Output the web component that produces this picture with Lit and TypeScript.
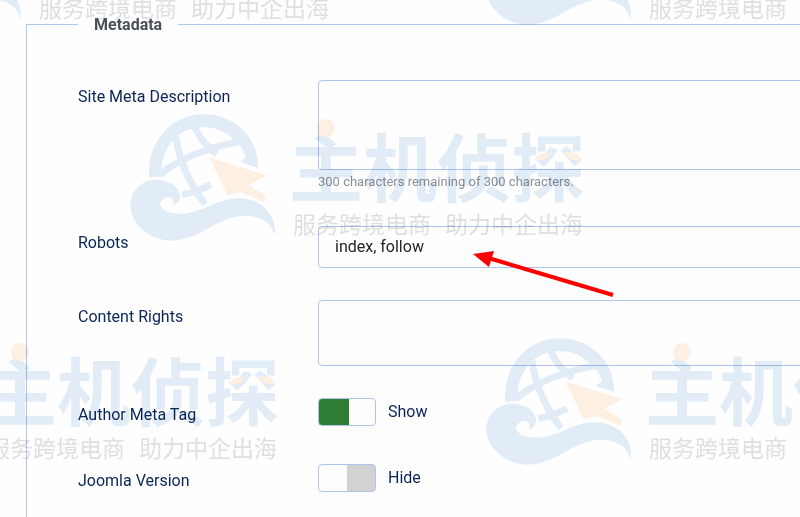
import { LitElement, html, svg, css } from "lit";
import { customElement, state } from "lit/decorators.js";

const STAMPS = [
  { x: -254, y: -216 },
  { x: 356, y: -216 },
  { x: 0, y: 0 },
  { x: -306, y: 224 },
  { x: 356, y: 224 },
];

@customElement("brand-watermark")
export class BrandWatermark extends LitElement {
  static styles = css`
    :host {
      position: absolute;
      inset: 0;
      pointer-events: none;
      mix-blend-mode: multiply;
    }
    .layer {
      display: block;
      width: 100%;
      height: 100%;
    }
    .blue {
      fill: #e3edf8;
    }
    .line {
      fill: none;
      stroke: #e3edf8;
      stroke-width: 21;
    }
    .orange {
      fill: #fef0e2;
    }
    .name {
      font: 700 74px "Noto Sans CJK SC", sans-serif;
      fill: #e3edf8;
    }
    .tagline {
      font: 400 23px "Noto Sans CJK SC", sans-serif;
      fill: #e0e0e0;
    }
  `;

  private stamp(x: number, y: number) {
    return svg`
      <g transform="translate(${x} ${y})">
        <g transform="translate(120 105) scale(0.3333)">
          <path class="blue" d="M88 219 C78 112 155 28 250 28 C345 28 417 100 414 189 L361 171 C362 164 377 162 377 155 C376 145 368 130 356 120 L335 98 C310 75 280 66 245 66 C175 67 120 130 124 217 Q106 213 88 219Z"></path>
          <path class="line" d="M120 209 Q205 138 362 109"></path>
          <path class="line" d="M168 95 Q182 200 255 298"></path>
          <path class="line" d="M224 66 Q242 110 290 148"></path>
          <path class="line" d="M187 269 Q232 260 273 238"></path>
          <path class="orange" d="M270 158 L440 211 L386 239 L439 274 L431 291 L364 262 L322 270Z"></path>
          <path class="blue" d="M463 391 C455 352 420 331 370 332 C290 336 240 405 155 407 C80 405 30 350 31 300 C33 250 70 224 110 224 C155 226 182 250 180 276 C178 292 166 299 158 300 C165 285 156 275 143 276 C125 279 118 292 122 303 C130 320 155 327 190 326 C250 322 290 280 360 280 C430 282 473 335 463 391Z"></path>
        </g>
        <text class="name" x="289" y="196">主机侦探</text>
        <circle class="orange" cx="326" cy="128" r="9"></circle>
        <path class="orange" d="M534 160 Q540 151 552 153 Q546 162 534 160Z M564 153 Q576 150 582 160 Q570 162 564 153Z"></path>
        <text class="tagline" x="293" y="233">服务跨境电商</text>
        <text class="tagline" x="445" y="233">助力中企出海</text>
      </g>`;
  }

  render() {
    return html`<svg class="layer" aria-hidden="true">
      ${STAMPS.map((s) => this.stamp(s.x, s.y))}
    </svg>`;
  }
}

@customElement("app-root")
export class AppRoot extends LitElement {
  @state() private author = true;
  @state() private version = false;

  static styles = css`
    * {
      box-sizing: border-box;
    }
    :host {
      position: relative;
      display: flex;
      flex-direction: column;
      min-height: 100vh;
      padding: 12px 0 0 26px;
      box-sizing: border-box;
      overflow: hidden;
      background: #fefefe;
      color: #132f53;
      font: 400 16px/24px Roboto, sans-serif;
    }
    .panel {
      flex: 1;
      min-width: 0;
      margin: 0 -24px 0 0;
      padding: 44px 0 16px 51px;
      border: 1px solid #aec6ea;
      border-bottom: 0;
    }
    .title {
      padding: 1px 16px 0;
      line-height: 23px;
      font-weight: 700;
      color: #495057;
    }
    .fields {
      display: grid;
      gap: 32px;
    }
    .row {
      display: grid;
      grid-template-columns: 240px 1fr;
      align-items: start;
    }
    .label {
      padding-top: 5px;
      color: #0a2458;
    }
    .box {
      display: block;
      width: 100%;
      margin: 0;
      padding: 8px 16px;
      border: 1px solid #aec4ea;
      border-radius: 4px;
      background: #fefefe;
      color: #22262a;
      font: inherit;
      resize: none;
      appearance: none;
    }
    .tall {
      height: 90px;
    }
    .medium {
      height: 66px;
    }
    .hint {
      padding-bottom: 0;
      font-size: 13px;
      line-height: 24px;
      color: #8b9095;
    }
    .toggle {
      display: flex;
      align-items: center;
      gap: 12px;
      height: 28px;
      color: #0a2458;
    }
    .toggle-row {
      height: 34px;
    }
    .switch {
      width: 58px;
      height: 28px;
      margin: 0;
      border: 1px solid #aec4ea;
      border-radius: 4px;
      appearance: none;
      background: linear-gradient(to right, #fefefe 50%, #d2d2d2 50%);
    }
    .switch:checked {
      background: linear-gradient(to right, #2f7d32 30px, #fefefe 30px);
    }
    .arrow {
      position: absolute;
      left: 472px;
      top: 248px;
      pointer-events: none;
    }
  `;

  render() {
    return html`
      <fieldset class="panel">
        <legend class="title">Metadata</legend>
        <div class="fields">
          <div class="row">
            <label class="label" for="description">Site Meta Description</label>
            <div>
              <textarea class="box tall" id="description" aria-describedby="remaining"></textarea>
              <div class="hint" id="remaining">300 characters remaining of 300 characters.</div>
            </div>
          </div>
          <div class="row">
            <label class="label" for="robots">Robots</label>
            <select class="box" id="robots">
              <option>index, follow</option>
              <option>noindex, follow</option>
              <option>index, nofollow</option>
              <option>noindex, nofollow</option>
            </select>
          </div>
          <div class="row">
            <label class="label" for="rights">Content Rights</label>
            <textarea class="box medium" id="rights"></textarea>
          </div>
          <div class="row toggle-row">
            <label class="label" for="author">Author Meta Tag</label>
            <div class="toggle">
              <input class="switch" id="author" type="checkbox" role="switch" .checked=${this.author}
                @change=${(e: Event) => (this.author = (e.target as HTMLInputElement).checked)} />
              <label for="author">${this.author ? "Show" : "Hide"}</label>
            </div>
          </div>
          <div class="row">
            <label class="label" for="version">Joomla Version</label>
            <div class="toggle">
              <input class="switch" id="version" type="checkbox" role="switch" .checked=${this.version}
                @change=${(e: Event) => (this.version = (e.target as HTMLInputElement).checked)} />
              <label for="version">${this.version ? "Show" : "Hide"}</label>
            </div>
          </div>
        </div>
      </fieldset>
      <brand-watermark></brand-watermark>
      <svg class="arrow" width="144" height="52" aria-hidden="true">
        <path d="M18 10.5 L141 47" stroke="#fe0000" stroke-width="4"></path>
        <path d="M1 6 L22 3 L17 19Z" fill="#fe0000"></path>
      </svg>
    `;
  }
}
